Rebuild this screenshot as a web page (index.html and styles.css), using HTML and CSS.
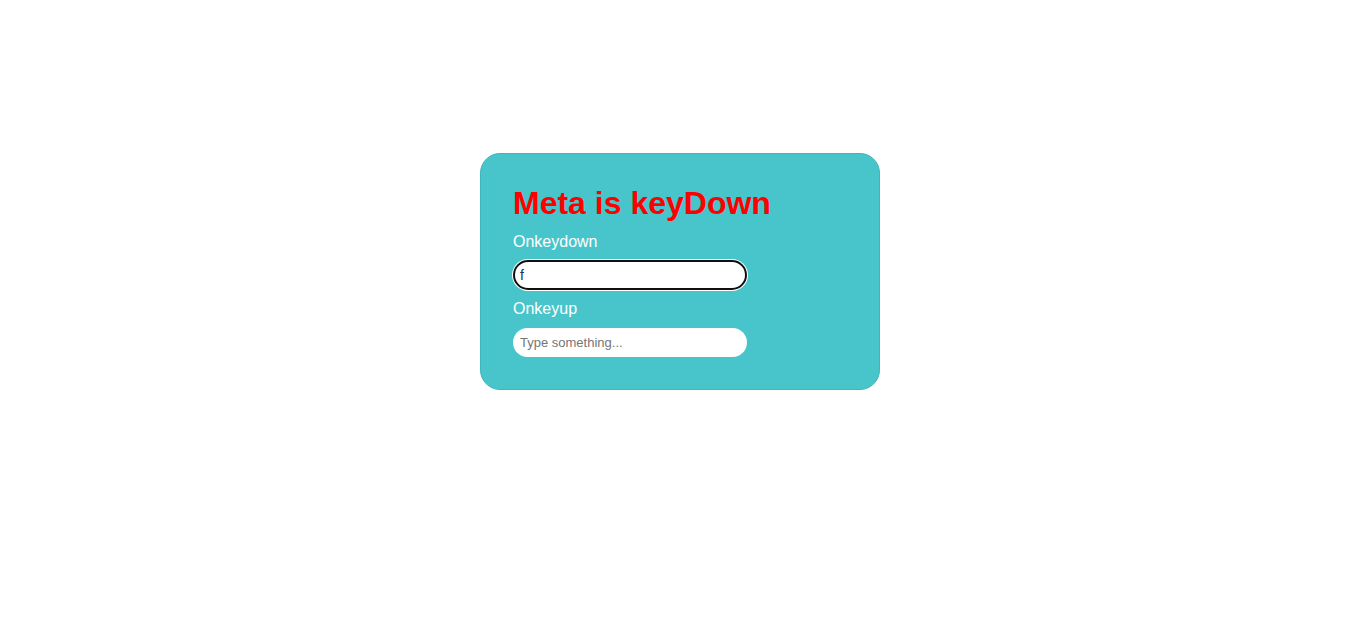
FILE: index.html
```html
<!DOCTYPE html>
<html>
<head>
<meta charset="utf-8">
<link rel="stylesheet" href="styles.css">
</head>
<body>
<div class="page">
  <div class="card">
    <h1 class="title">Meta is keyDown</h1>
    <label class="label lbl-down">Onkeydown</label>
    <div class="field focused"><span class="value">f</span></div>
    <label class="label lbl-up">Onkeyup</label>
    <div class="field"><span class="placeholder">Type something...</span></div>
  </div>
</div>
</body>
</html>
```
FILE: styles.css
```css
html, body { margin: 0; padding: 0; background: #fff; }
body { font-family: "Liberation Sans", Arial, sans-serif; }
.page { padding-top: 153px; padding-left: 480px; }
.card {
  box-sizing: border-box;
  width: 400px;
  height: 237px;
  background: #48c5ca;
  border: 1px solid #3fb6bb;
  border-radius: 20px;
  padding: 31px 32px 32px;
  display: flex;
  flex-direction: column;
  align-items: flex-start;
}
.title {
  margin: 0;
  font-size: 32px;
  line-height: 37px;
  font-weight: bold;
  color: #ff0000;
}
.label {
  display: block;
  color: #fff;
  font-size: 16px;
  line-height: 18px;
}
.lbl-down { margin-top: 11px; }
.lbl-up { margin-top: 10px; }
.field {
  box-sizing: border-box;
  width: 234px;
  height: 29px;
  background: #fff;
  border-radius: 15px;
  margin-top: 9px;
  display: flex;
  align-items: center;
  padding-left: 7px;
  font-size: 13px;
}
.lbl-up + .field { margin-top: 10px; }
.field.focused {
  height: 30px;
  border: 2px solid #101010;
  box-shadow: 0 0 0 1px #fff;
  padding-left: 5px;
  font-size: 14px;
}
.value { color: #0a3a5a; }
.placeholder { color: #757575; }
```
